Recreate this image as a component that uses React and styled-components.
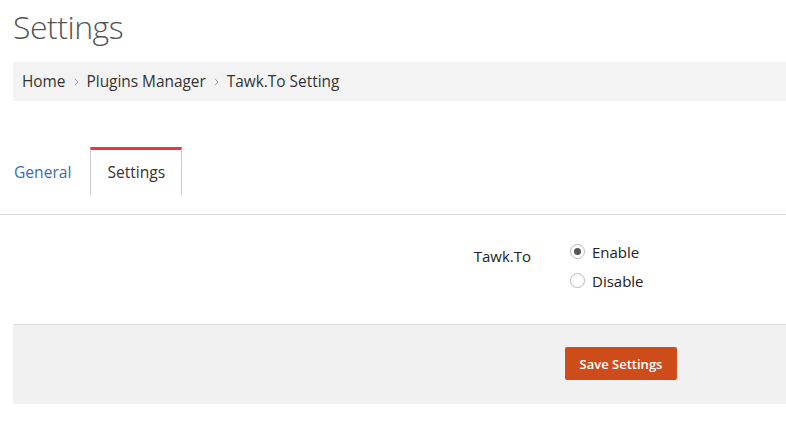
import React from "react";
import styled, { createGlobalStyle } from "styled-components";

const Global = createGlobalStyle`
  html, body { margin: 0; padding: 0; background: #fff; }
  body { font-family: "Open Sans", "Liberation Sans", sans-serif; color: #333; }
  * { box-sizing: border-box; }
`;

const Page = styled.div`
  width: 786px;
  overflow: hidden;
`;

const Section = styled.div`
  padding-left: 13px;
`;

const Title = styled.h1`
  margin: 5px 0 0;
  font-size: 32px;
  line-height: 44px;
  font-weight: 300;
  letter-spacing: -0.5px;
  color: #555;
`;

const Breadcrumb = styled.nav`
  margin-top: 13px;
  height: 39px;
  background: #f3f3f3;
  display: flex;
  align-items: center;
  padding-left: 9px;
  font-size: 15.4px;
  color: #333;
`;

const Crumb = styled.span``;

const Sep = styled.svg`
  width: 5px;
  height: 8px;
  margin: 0 8px;
  flex: none;
`;

const Chevron = () => (
  <Sep viewBox="0 0 5 8">
    <path d="M1 0.8 L4 4 L1 7.2" fill="none" stroke="#9a9a9a" strokeWidth="1" />
  </Sep>
);

const TabList = styled.div`
  margin-top: 46px;
  display: flex;
  align-items: flex-end;
`;

const Tab = styled.div`
  height: 48px;
  line-height: 45px;
  font-size: 15.6px;
  padding: 0 ${(p) => (p.$active ? "16px" : "18px")} 0 ${(p) => (p.$active ? "16px" : "0")};
  border-top: 3px solid ${(p) => (p.$active ? "#e23a45" : "transparent")};
  border-left: 1px solid ${(p) => (p.$active ? "#cfcfcf" : "transparent")};
  border-right: 1px solid ${(p) => (p.$active ? "#cfcfcf" : "transparent")};
  color: ${(p) => (p.$active ? "#333" : "#3b6db4")};
`;

const Divider = styled.hr`
  margin: 19px 0 0;
  border: 0;
  border-top: 1px solid #d8d8d8;
`;

const FormRow = styled.div`
  display: grid;
  grid-template-columns: 557px 1fr;
  padding: 22px 0 29px;
`;

const Label = styled.div`
  text-align: right;
  padding-right: 39px;
  padding-top: 5px;
  font-size: 15px;
  line-height: 29px;
  color: #222;
`;

const RadioGroup = styled.div`
  display: flex;
  flex-direction: column;
`;

const Option = styled.label`
  display: flex;
  align-items: center;
  gap: 7px;
  height: 29px;
  font-size: 15px;
  color: #222;
`;

const Circle = styled.span`
  width: 15px;
  height: 15px;
  border-radius: 50%;
  border: 1px solid #b9b9b9;
  background: #fff;
  display: flex;
  align-items: center;
  justify-content: center;
  &::after {
    content: "";
    width: 7px;
    height: 7px;
    border-radius: 50%;
    background: ${(p) => (p.$checked ? "#555" : "transparent")};
  }
`;

const Footer = styled.div`
  border-top: 1px solid #dcdcdc;
  background: #f1f1f1;
  height: 80px;
  padding: 22px 0 0 552px;
`;

const Button = styled.button`
  width: 112px;
  height: 33px;
  border: 0;
  border-radius: 2px;
  background: #ce4c1a;
  color: #fff;
  font-family: "Open Sans", "Liberation Sans", sans-serif;
  font-size: 13px;
  font-weight: 600;
  padding: 0;
`;

export default function App() {
  return (
    <Page>
      <Global />
      <Section>
        <Title>Settings</Title>
        <Breadcrumb>
          <Crumb>Home</Crumb>
          <Chevron />
          <Crumb>Plugins Manager</Crumb>
          <Chevron />
          <Crumb>Tawk.To Setting</Crumb>
        </Breadcrumb>
        <TabList>
          <Tab>General</Tab>
          <Tab $active>Settings</Tab>
        </TabList>
      </Section>
      <Divider />
      <Section>
        <FormRow>
          <Label>Tawk.To</Label>
          <RadioGroup>
            <Option>
              <Circle $checked />
              Enable
            </Option>
            <Option>
              <Circle />
              Disable
            </Option>
          </RadioGroup>
        </FormRow>
        <Footer>
          <Button>Save Settings</Button>
        </Footer>
      </Section>
    </Page>
  );
}
